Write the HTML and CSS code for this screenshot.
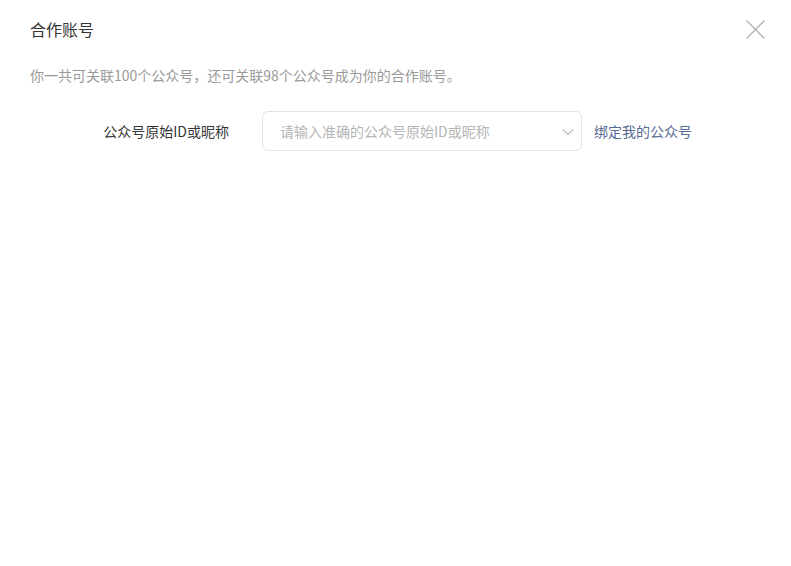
FILE: index.html
```html
<!DOCTYPE html>
<html lang="zh-CN">
<head>
<meta charset="utf-8">
<link rel="stylesheet" href="styles.css">
</head>
<body>
<div class="dialog">
  <div class="header">
    <h3 class="title">合作账号</h3>
    <button class="close" aria-label="关闭">
      <svg width="19" height="19" viewBox="0 0 19 19"><path d="M0.5 0.5L18.5 18.5M18.5 0.5L0.5 18.5" stroke="#b0b0b0" stroke-width="1.3" fill="none"/></svg>
    </button>
  </div>
  <p class="desc">你一共可关联100个公众号，还可关联98个公众号成为你的合作账号。</p>
  <div class="form-row">
    <label class="label">公众号原始ID或昵称</label>
    <div class="select">
      <span class="placeholder">请输入准确的公众号原始ID或昵称</span>
      <svg class="arrow" width="12" height="8" viewBox="0 0 12 8"><path d="M1 1.5L6 6.5L11 1.5" stroke="#b8b8b8" stroke-width="1.1" fill="none"/></svg>
    </div>
    <a class="link" href="#">绑定我的公众号</a>
  </div>
</div>
</body>
</html>
```
FILE: styles.css
```css
* { box-sizing: border-box; }
html, body {
  margin: 0;
  padding: 0;
  background: #fff;
  font-family: "Noto Sans CJK SC", "Noto Sans", sans-serif;
}
.dialog {
  width: 791px;
  height: 566px;
  background: #fff;
}
.header {
  display: flex;
  align-items: center;
  justify-content: space-between;
  padding: 18px 26px 0 30px;
  height: 40px;
}
.title {
  margin: 0;
  font-size: 16px;
  font-weight: normal;
  color: #353535;
  line-height: 22px;
}
.close {
  border: 0;
  background: none;
  padding: 0;
  width: 19px;
  height: 19px;
  display: flex;
  margin-top: 1px;
}
.desc {
  margin: 25px 30px 0;
  font-size: 14px;
  line-height: 20px;
  color: #9a9a9a;
}
.form-row {
  display: flex;
  align-items: center;
  margin-top: 26px;
  padding-left: 30px;
}
.label {
  width: 199px;
  text-align: right;
  font-size: 14px;
  color: #353535;
  margin-right: 33px;
}
.select {
  width: 320px;
  height: 40px;
  border: 1px solid #e2e2e2;
  border-radius: 6px;
  display: flex;
  align-items: center;
  justify-content: space-between;
  padding: 0 7px 0 17px;
}
.placeholder {
  font-size: 14px;
  color: #b5b5b5;
}
.arrow { margin-top: 1px; }
.link {
  margin-left: 12px;
  font-size: 14px;
  color: #576b95;
  text-decoration: none;
}
```
